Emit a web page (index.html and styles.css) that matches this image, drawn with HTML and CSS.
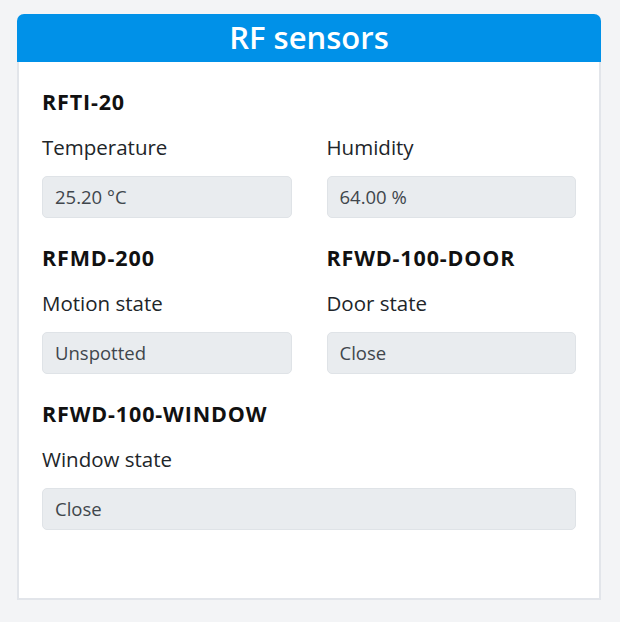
FILE: index.html
```html
<!DOCTYPE html>
<html lang="en">
<head>
<meta charset="utf-8">
<title>RF sensors</title>
<link rel="stylesheet" href="styles.css">
</head>
<body>
<div class="card">
  <div class="card-header">RF sensors</div>
  <div class="card-body">
    <div class="sensor">
      <div class="sensor-name">RFTI-20</div>
      <div class="fields">
        <div class="field">
          <div class="label">Temperature</div>
          <div class="value">25.20 °C</div>
        </div>
        <div class="field">
          <div class="label">Humidity</div>
          <div class="value">64.00 %</div>
        </div>
      </div>
    </div>
    <div class="fields">
      <div class="sensor">
        <div class="sensor-name">RFMD-200</div>
        <div class="field">
          <div class="label">Motion state</div>
          <div class="value">Unspotted</div>
        </div>
      </div>
      <div class="sensor">
        <div class="sensor-name">RFWD-100-DOOR</div>
        <div class="field">
          <div class="label">Door state</div>
          <div class="value">Close</div>
        </div>
      </div>
    </div>
    <div class="sensor">
      <div class="sensor-name">RFWD-100-WINDOW</div>
      <div class="field">
        <div class="label">Window state</div>
        <div class="value">Close</div>
      </div>
    </div>
  </div>
</div>
</body>
</html>
```
FILE: styles.css
```css
html, body {
  margin: 0;
  padding: 0;
  background: #f3f4f6;
}
body {
  font-family: "Open Sans", "Noto Sans", sans-serif;
  color: #212529;
  padding: 14px 19px 22px 17px;
}
.card {
  width: 584px;
  height: 586px;
  box-sizing: border-box;
  background: #ffffff;
  border: 2px solid #e2e5ea;
  border-top: none;
  border-radius: 7px 7px 0 0;
  display: flex;
  flex-direction: column;
}
.card-header {
  background: #0091e8;
  color: #ffffff;
  height: 48px;
  margin: 0 -2px;
  border-radius: 7px 7px 0 0;
  font-size: 31px;
  font-weight: 600;
  line-height: 47px;
  text-align: center;
}
.card-body {
  padding: 26px 23px 0 23px;
  display: flex;
  flex-direction: column;
}
.fields {
  display: grid;
  grid-template-columns: 1fr 1fr;
  column-gap: 35px;
}
.sensor {
  display: flex;
  flex-direction: column;
}
.sensor-name {
  font-size: 21.5px;
  font-weight: 700;
  letter-spacing: 0.85px;
  line-height: 28px;
  height: 28px;
  margin-bottom: 17px;
  color: #111;
}
.label {
  font-size: 20.5px;
  line-height: 28px;
  height: 28px;
  margin-bottom: 15px;
}
.value {
  background: #e9ecef;
  border: 1px solid #dfe3e7;
  border-radius: 5px;
  height: 42px;
  box-sizing: border-box;
  padding: 0 12px;
  font-size: 18.5px;
  line-height: 40px;
  color: #40464c;
  margin-bottom: 26px;
}
```
